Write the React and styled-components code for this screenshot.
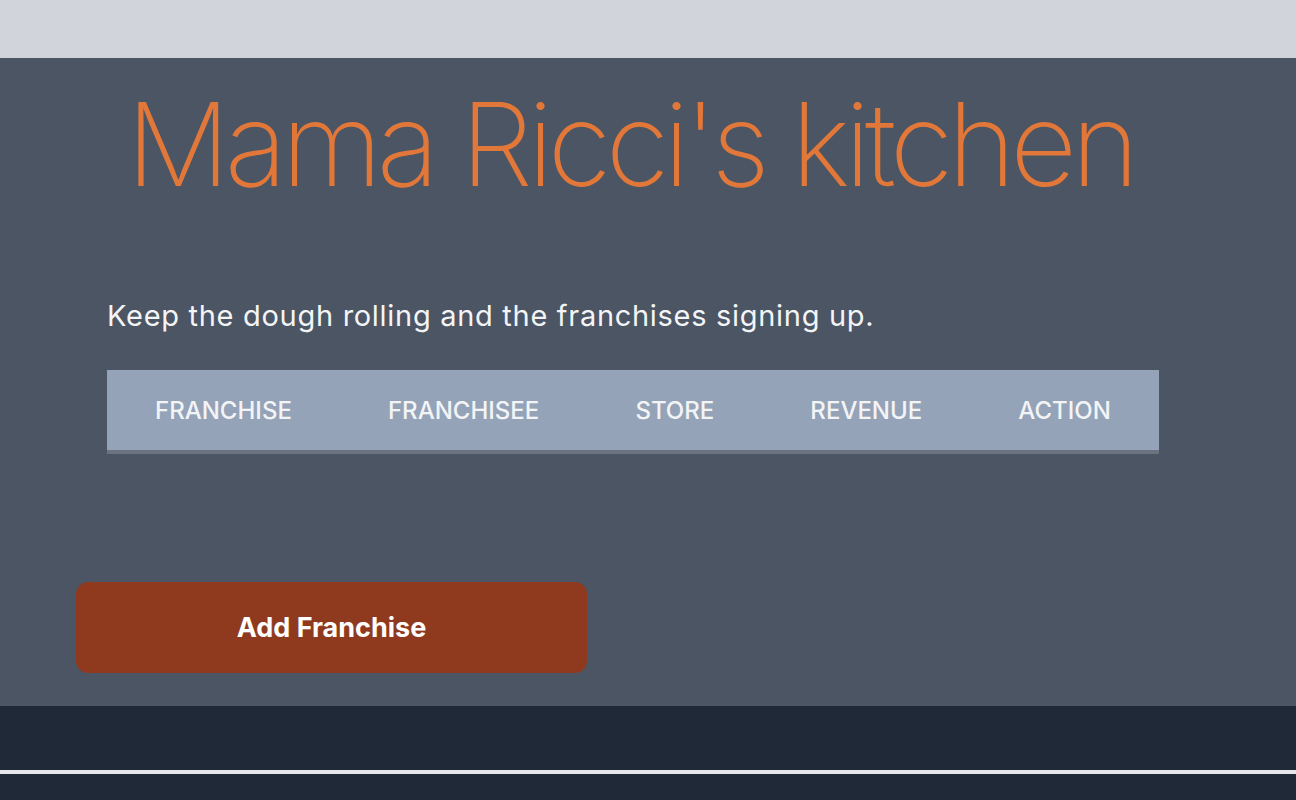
import React from "react";
import styled, { createGlobalStyle } from "styled-components";

const Global = createGlobalStyle`
  html, body { margin: 0; padding: 0; }
  body {
    font-family: Inter, "Noto Sans", "Liberation Sans", sans-serif;
    background: #1f2937;
  }
`;

const Page = styled.div`
  display: flex;
  flex-direction: column;
  min-height: 800px;
`;

const TopBar = styled.header`
  height: 58px;
  background: #d1d5db;
`;

const Main = styled.main`
  background: #4b5563;
  height: 648px;
  padding: 0 0 0 76px;
  box-sizing: border-box;
  display: flex;
  flex-direction: column;
`;

const Content = styled.div`
  width: 1052px;
  margin-left: 31px;
  display: flex;
  flex-direction: column;
`;

const Title = styled.h1`
  margin: 0;
  padding: 16px 6px 0 0;
  text-align: center;
  white-space: nowrap;
  font-size: 116px;
  line-height: 140px;
  font-weight: 200;
  color: #e2773a;
  letter-spacing: -5.6px;
`;

const Subtitle = styled.p`
  margin: 84px 0 0;
  font-size: 29px;
  line-height: 36px;
  color: #f3f4f6;
  font-weight: 400;
  letter-spacing: 0.7px;
`;

const Table = styled.table`
  margin-top: 36px;
  border-collapse: collapse;
`;

const HeadRow = styled.tr`
  background: #94a3b8;
  border-bottom: 4px solid #6b7280;
`;

const Th = styled.th`
  padding: 0 48px;
  height: 80px;
  text-align: left;
  font-size: 24px;
  font-weight: 500;
  color: #f3f4f6;
  text-transform: uppercase;
  white-space: nowrap;
`;

const Footer = styled.footer`
  flex: 1;
  background: #1f2937;
  display: flex;
  flex-direction: column;
`;

const Rule = styled.div`
  margin-top: 64px;
  height: 4px;
  background: #e5e7eb;
`;

const AddButton = styled.button`
  margin-top: 128px;
  width: 511px;
  height: 91px;
  border: none;
  border-radius: 12px;
  background: #8f3a1f;
  color: #ffffff;
  font-family: inherit;
  font-size: 27px;
  font-weight: 700;
  cursor: pointer;
`;

export default function App() {
  const cols = ["Franchise", "Franchisee", "Store", "Revenue", "Action"];
  return (
    <Page>
      <Global />
      <TopBar />
      <Main>
        <Content>
          <Title>Mama Ricci's kitchen</Title>
          <Subtitle>Keep the dough rolling and the franchises signing up.</Subtitle>
          <Table>
            <thead>
              <HeadRow>
                {cols.map((c) => (
                  <Th key={c}>{c}</Th>
                ))}
              </HeadRow>
            </thead>
          </Table>
        </Content>
        <AddButton>Add Franchise</AddButton>
      </Main>
      <Footer>
        <Rule />
      </Footer>
    </Page>
  );
}
